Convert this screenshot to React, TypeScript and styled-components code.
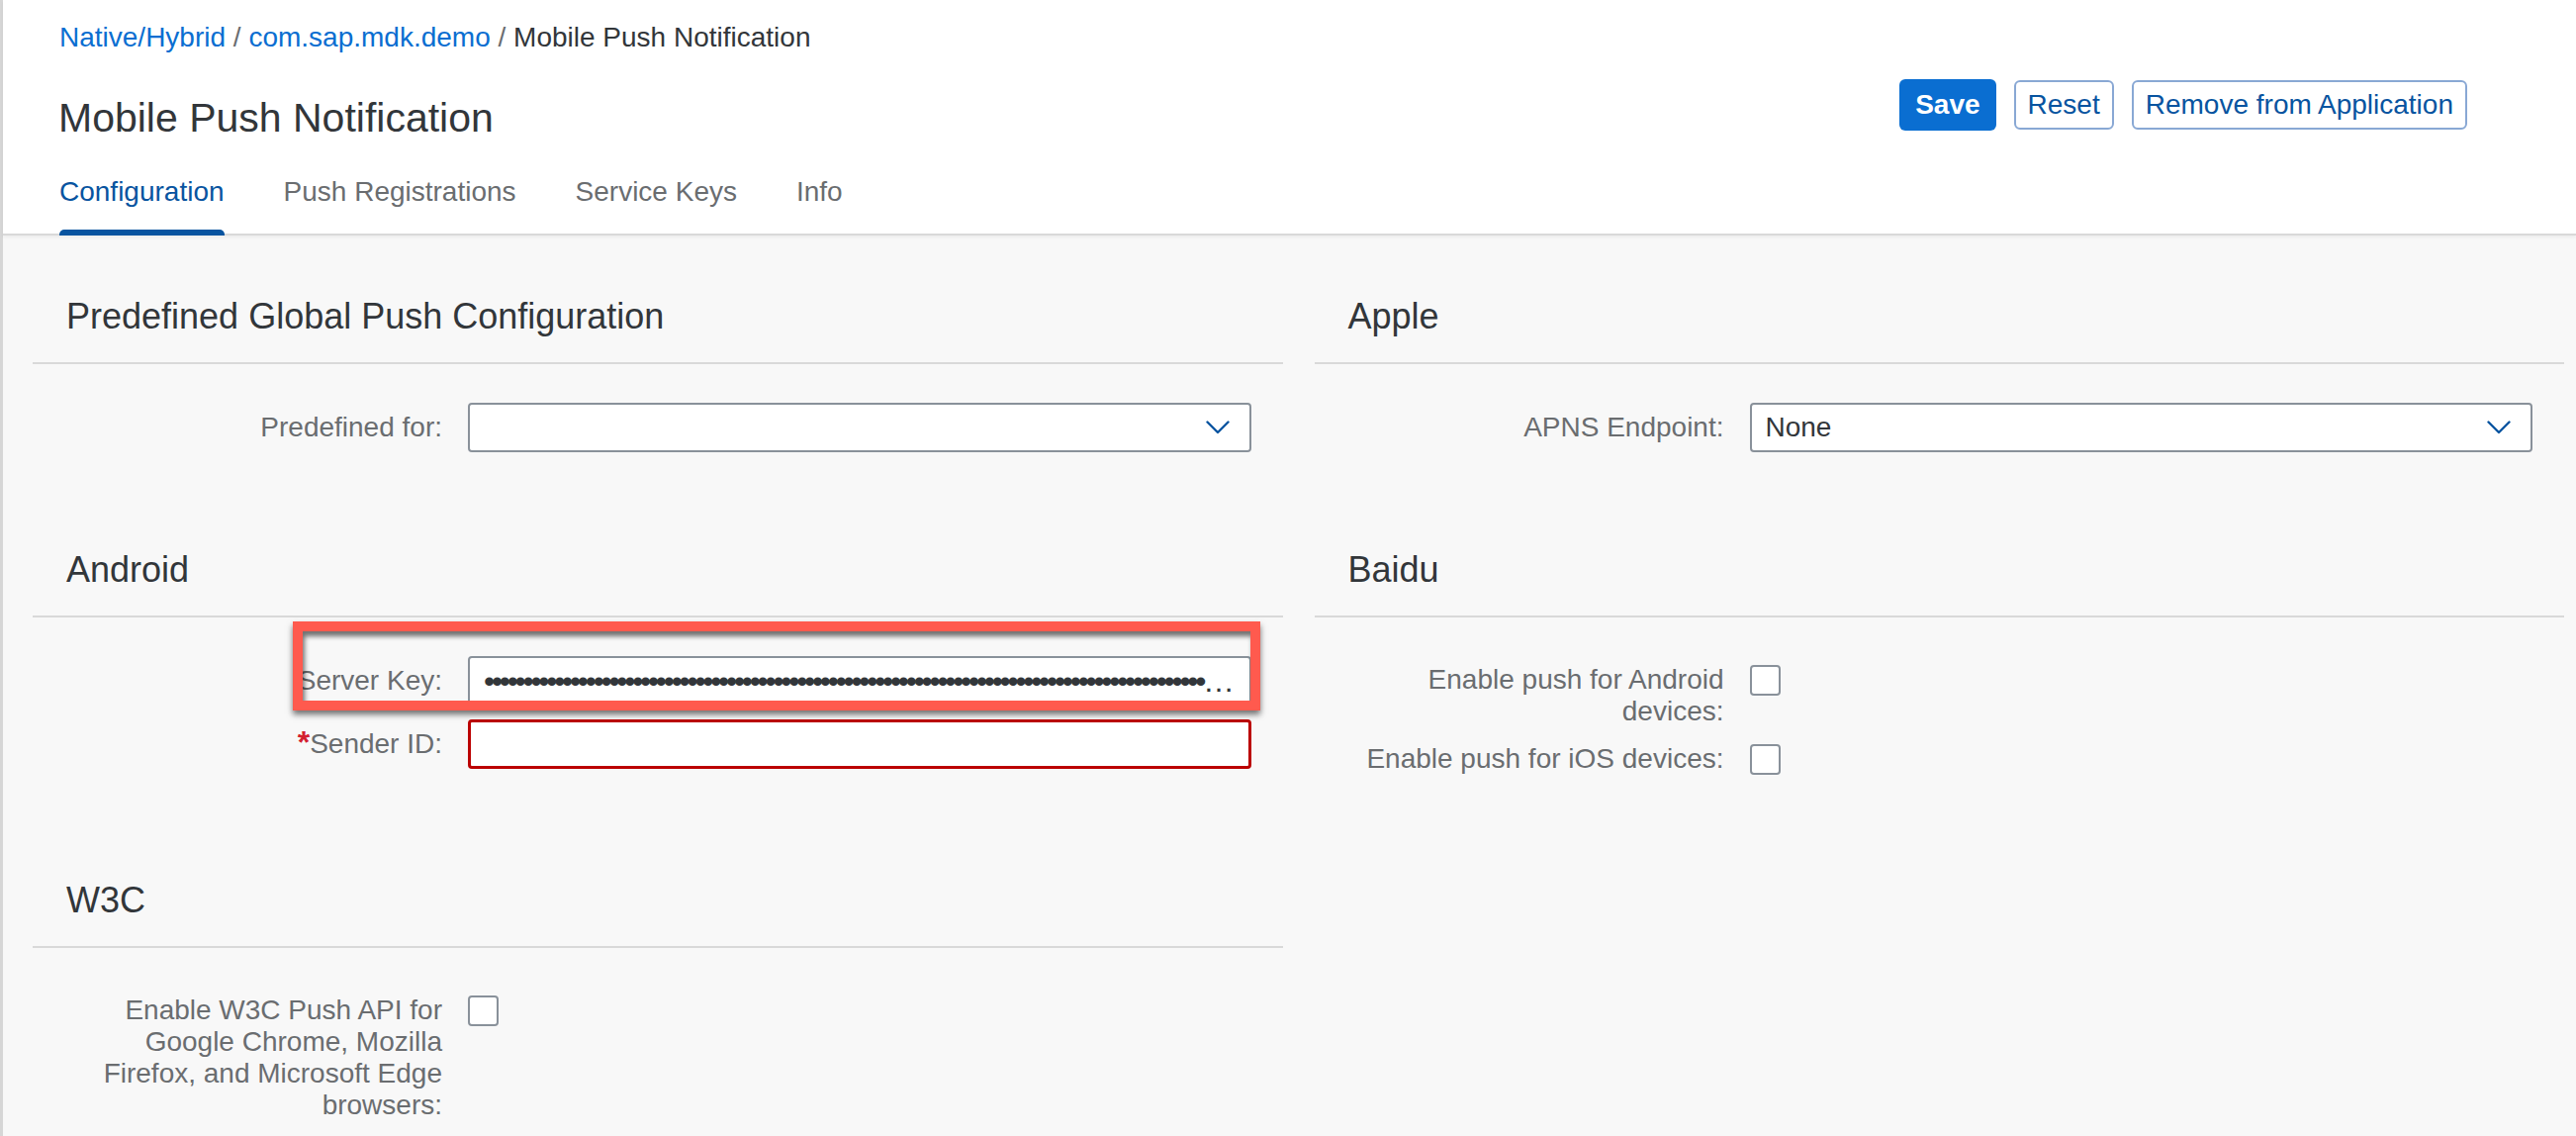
import React from "react";
import styled, { createGlobalStyle, css } from "styled-components";

const GlobalStyle = createGlobalStyle`
  html, body { margin: 0; padding: 0; }
  body {
    font-family: "Liberation Sans", Arial, sans-serif;
    background: #f8f8f8;
    color: #32363a;
  }
  * { box-sizing: border-box; }
`;

const Page = styled.div`
  min-height: 100vh;
  display: flex;
  flex-direction: column;
  border-left: 3px solid #d6d6d6;
  background: #f8f8f8;
`;

const Header = styled.header`
  background: #ffffff;
  padding: 18px 110px 0 57px;
  border-bottom: 2px solid #d9d9d9;
  box-shadow: 0 2px 3px rgba(0, 0, 0, 0.05);
  position: relative;
`;

const HeaderTop = styled.div`
  display: flex;
  justify-content: space-between;
  align-items: flex-start;
`;

const TitleBlock = styled.div`
  display: flex;
  flex-direction: column;
`;

const Breadcrumb = styled.nav`
  font-size: 28px;
  line-height: 40px;
  color: #32363a;
  white-space: nowrap;
`;

const Crumb = styled.span<{ $link?: boolean }>`
  color: ${(p) => (p.$link ? "#0a6ed1" : "#32363a")};
`;

const Sep = styled.span`
  color: #6a6d70;
`;

const Title = styled.h1`
  margin: 33px 0 0 -1px;
  font-size: 41px;
  line-height: 56px;
  font-weight: 400;
  color: #32363a;
  white-space: nowrap;
`;

const Actions = styled.div`
  display: flex;
  align-items: center;
  gap: 18px;
  margin-top: 62px;
`;

const Button = styled.button<{ $primary?: boolean }>`
  font-family: "Liberation Sans", Arial, sans-serif;
  font-size: 28px;
  border-radius: 6px;
  cursor: pointer;
  white-space: nowrap;
  ${(p) =>
    p.$primary
      ? css`
          height: 52px;
          padding: 0 16px;
          background: #0a6ed1;
          border: none;
          color: #ffffff;
          font-weight: 700;
        `
      : css`
          height: 50px;
          padding: 0 12px;
          background: #ffffff;
          border: 2px solid #89a8d4;
          color: #0854a0;
          font-weight: 400;
        `}
`;

const TabBar = styled.div`
  display: flex;
  gap: 60px;
  margin-top: 27px;
`;

const Tab = styled.div<{ $active?: boolean }>`
  position: relative;
  font-size: 28px;
  line-height: 40px;
  padding-bottom: 22px;
  color: ${(p) => (p.$active ? "#0854a0" : "#6a6d70")};
  white-space: nowrap;
  ${(p) =>
    p.$active &&
    css`
      &::after {
        content: "";
        position: absolute;
        left: 0;
        right: 0;
        bottom: -2px;
        height: 6px;
        background: #0854a0;
        border-radius: 5px 5px 0 0;
      }
    `}
`;

const Content = styled.main`
  flex: 1;
  padding: 57.5px 12px 40px 30px;
  display: grid;
  grid-template-columns: 1fr 1fr;
  column-gap: 32px;
  row-gap: 94.5px;
  align-items: start;
`;

const Section = styled.section`
  display: flex;
  flex-direction: column;
`;

const SectionHeading = styled.h2`
  margin: 0;
  font-size: 36px;
  line-height: 48px;
  font-weight: 400;
  color: #32363a;
  padding: 0 0 22px 34px;
  border-bottom: 2px solid #d9d9d9;
`;

const FormBody = styled.div<{ $gap: number }>`
  position: relative;
  display: flex;
  flex-direction: column;
  gap: ${(p) => p.$gap}px;
  padding: 39.5px 32px 0 0;
`;

const FieldRow = styled.div<{ $top?: boolean }>`
  display: grid;
  grid-template-columns: 414px 1fr;
  column-gap: 26px;
  align-items: ${(p) => (p.$top ? "start" : "center")};
`;

const Label = styled.label<{ $padded?: boolean }>`
  text-align: right;
  padding-left: 30px;
  font-size: 28px;
  line-height: 32px;
  color: #6a6d70;
  padding-top: ${(p) => (p.$padded ? "8px" : "0")};
  padding-bottom: ${(p) => (p.$padded ? "8px" : "0")};
`;

const Required = styled.span`
  color: #d32030;
  font-weight: 700;
  font-size: 32px;
  line-height: 20px;
`;

const FieldBox = styled.div<{ $error?: boolean }>`
  height: 50px;
  background: #ffffff;
  border: ${(p) => (p.$error ? "3px solid #bb0000" : "2px solid #89919a")};
  border-radius: 4px;
  display: flex;
  align-items: center;
  justify-content: space-between;
  padding: 0 20px 0 14px;
  min-width: 0;
  font-size: 28px;
  color: #32363a;
`;

const Dots = styled.span`
  display: block;
  flex: 1;
  min-width: 0;
  overflow: hidden;
  white-space: nowrap;
  text-overflow: ellipsis;
  font-size: 32px;
  line-height: 42px;
  letter-spacing: -3.3px;
  color: #32363a;
  margin-right: -6px;
`;

const Checkbox = styled.div`
  width: 31px;
  height: 31px;
  margin-top: 9px;
  border: 2px solid #89919a;
  border-radius: 4px;
  background: #ffffff;
`;

const Annotation = styled.div`
  position: absolute;
  left: 263px;
  top: 4.5px;
  width: 978px;
  height: 90px;
  border: 10px solid #ff5a4e;
  box-shadow: 0 4px 6px rgba(0, 0, 0, 0.55), inset 2px 5px 5px rgba(0, 0, 0, 0.55);
  pointer-events: none;
`;

const Chevron = () => (
  <svg width="24" height="14" viewBox="0 0 24 14" aria-hidden>
    <path d="M1.5 1.5 L12 12 L22.5 1.5" fill="none" stroke="#0854a0" strokeWidth="2.4" strokeLinecap="round" strokeLinejoin="round" />
  </svg>
);

const Select = ({ value }: { value?: string }) => (
  <FieldBox>
    <span>{value ?? ""}</span>
    <Chevron />
  </FieldBox>
);

const bullets = "•".repeat(140);

export default function App() {
  return (
    <>
      <GlobalStyle />
      <Page>
        <Header>
          <HeaderTop>
            <TitleBlock>
              <Breadcrumb>
                <Crumb $link>Native/Hybrid</Crumb>
                <Sep> / </Sep>
                <Crumb $link>com.sap.mdk.demo</Crumb>
                <Sep> / </Sep>
                <Crumb>Mobile Push Notification</Crumb>
              </Breadcrumb>
              <Title>Mobile Push Notification</Title>
            </TitleBlock>
            <Actions>
              <Button $primary>Save</Button>
              <Button>Reset</Button>
              <Button>Remove from Application</Button>
            </Actions>
          </HeaderTop>
          <TabBar>
            <Tab $active>Configuration</Tab>
            <Tab>Push Registrations</Tab>
            <Tab>Service Keys</Tab>
            <Tab>Info</Tab>
          </TabBar>
        </Header>

        <Content>
          <Section>
            <SectionHeading>Predefined Global Push Configuration</SectionHeading>
            <FormBody $gap={14}>
              <FieldRow>
                <Label>Predefined for:</Label>
                <Select />
              </FieldRow>
            </FormBody>
          </Section>

          <Section>
            <SectionHeading>Apple</SectionHeading>
            <FormBody $gap={14}>
              <FieldRow>
                <Label>APNS Endpoint:</Label>
                <Select value="None" />
              </FieldRow>
            </FormBody>
          </Section>

          <Section>
            <SectionHeading>Android</SectionHeading>
            <FormBody $gap={14}>
              <FieldRow>
                <Label>Server Key:</Label>
                <FieldBox>
                  <Dots>{bullets}</Dots>
                </FieldBox>
              </FieldRow>
              <FieldRow>
                <Label>
                  <Required>*</Required>Sender ID:
                </Label>
                <FieldBox $error />
              </FieldRow>
              <Annotation />
            </FormBody>
          </Section>

          <Section>
            <SectionHeading>Baidu</SectionHeading>
            <FormBody $gap={0}>
              <FieldRow $top>
                <Label $padded>Enable push for Android devices:</Label>
                <Checkbox />
              </FieldRow>
              <FieldRow $top>
                <Label $padded>Enable push for iOS devices:</Label>
                <Checkbox />
              </FieldRow>
            </FormBody>
          </Section>

          <Section>
            <SectionHeading>W3C</SectionHeading>
            <FormBody $gap={0}>
              <FieldRow $top>
                <Label $padded>
                  Enable W3C Push API for Google Chrome, Mozilla Firefox, and Microsoft Edge browsers:
                </Label>
                <Checkbox />
              </FieldRow>
            </FormBody>
          </Section>
        </Content>
      </Page>
    </>
  );
}
